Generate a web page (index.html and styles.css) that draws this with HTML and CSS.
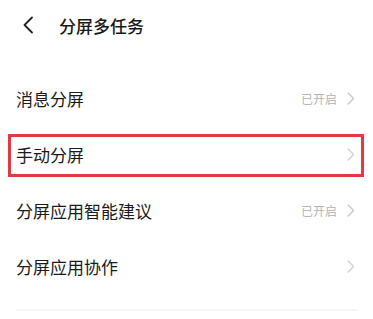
FILE: index.html
```html
<!DOCTYPE html>
<html lang="zh-CN">
<head>
<meta charset="utf-8">
<link rel="stylesheet" href="styles.css">
</head>
<body>
<div class="page">
  <header class="header">
    <svg class="back" width="12" height="18" viewBox="0 0 12 18"><path d="M10 1.5 L2.5 9 L10 16.5" fill="none" stroke="#222" stroke-width="1.8" stroke-linecap="round" stroke-linejoin="round"/></svg>
    <span class="title">分屏多任务</span>
  </header>
  <div class="list">
    <div class="row">
      <span class="label">消息分屏</span>
      <span class="right"><span class="status">已开启</span><svg class="chev" width="8" height="13" viewBox="0 0 8 13"><path d="M1.2 1 L6.5 6.5 L1.2 12" fill="none" stroke="#c9c9c9" stroke-width="1.4" stroke-linecap="round" stroke-linejoin="round"/></svg></span>
    </div>
    <div class="row highlight">
      <span class="label">手动分屏</span>
      <span class="right"><svg class="chev" width="8" height="13" viewBox="0 0 8 13"><path d="M1.2 1 L6.5 6.5 L1.2 12" fill="none" stroke="#d2d2d2" stroke-width="1.4" stroke-linecap="round" stroke-linejoin="round"/></svg></span>
    </div>
    <div class="row">
      <span class="label">分屏应用智能建议</span>
      <span class="right"><span class="status">已开启</span><svg class="chev" width="8" height="13" viewBox="0 0 8 13"><path d="M1.2 1 L6.5 6.5 L1.2 12" fill="none" stroke="#c9c9c9" stroke-width="1.4" stroke-linecap="round" stroke-linejoin="round"/></svg></span>
    </div>
    <div class="row">
      <span class="label">分屏应用协作</span>
      <span class="right"><svg class="chev" width="8" height="13" viewBox="0 0 8 13"><path d="M1.2 1 L6.5 6.5 L1.2 12" fill="none" stroke="#d2d2d2" stroke-width="1.4" stroke-linecap="round" stroke-linejoin="round"/></svg></span>
    </div>
  </div>
  <div class="divider"></div>
</div>
</body>
</html>
```
FILE: styles.css
```css
html, body {
  margin: 0;
  padding: 0;
  background: #fff;
}
body {
  font-family: "Noto Sans CJK SC", "Noto Sans", sans-serif;
  color: #1a1a1a;
  width: 373px;
  height: 319px;
  overflow: hidden;
}
.page {
  display: flex;
  flex-direction: column;
}
.header {
  height: 50px;
  padding-bottom: 2px;
  display: flex;
  align-items: center;
  padding-left: 22px;
}
.back {
  display: block;
  margin-right: 25px;
}
.title {
  font-size: 17px;
  font-weight: 500;
  line-height: 1;
}
.list {
  margin-top: 20px;
  display: flex;
  flex-direction: column;
}
.row {
  position: relative;
  height: 53px;
  padding: 0 18px 3px 16px;
  display: flex;
  align-items: center;
  justify-content: space-between;
}
.label {
  font-size: 17px;
  line-height: 1;
}
.right {
  display: flex;
  align-items: center;
}
.status {
  font-size: 12px;
  color: #b4b4b4;
  margin-right: 10px;
  line-height: 1;
}
.chev {
  display: block;
}
.highlight::after {
  content: "";
  position: absolute;
  left: 8px;
  right: 9px;
  top: 6px;
  bottom: 7px;
  border: 3px solid #e6393f;
}
.divider {
  margin: 13px 15px 0 16px;
  height: 2px;
  background: #f5f5f5;
}
```
